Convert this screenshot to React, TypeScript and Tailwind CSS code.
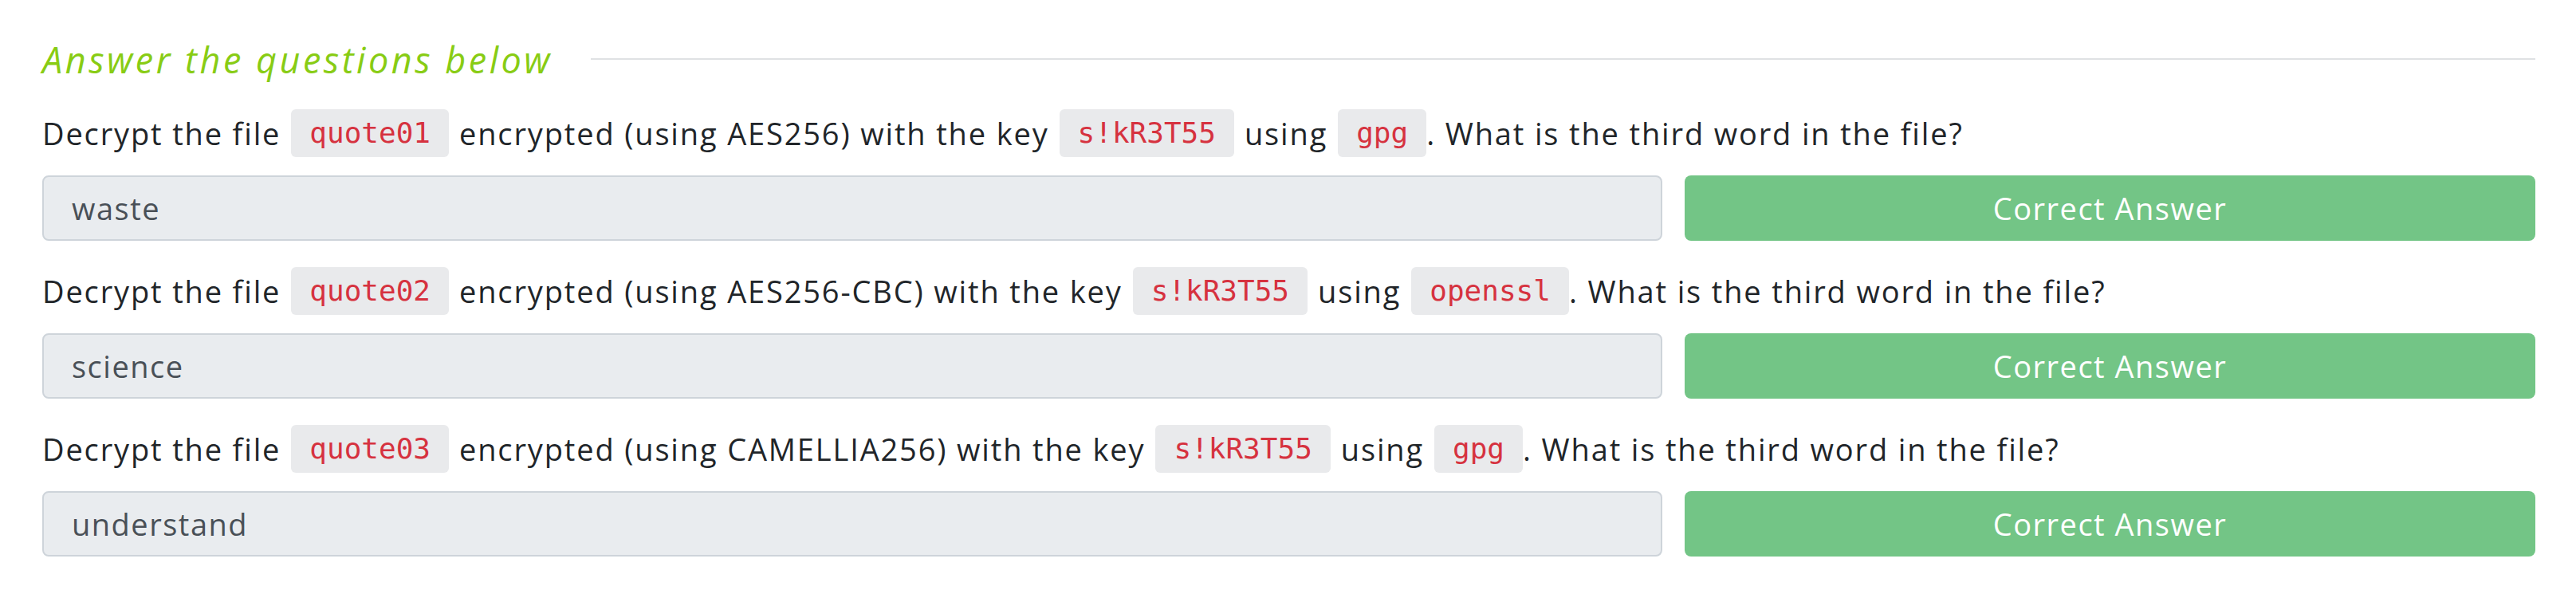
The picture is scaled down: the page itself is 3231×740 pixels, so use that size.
import React from "react";

const font = { fontFamily: '"Open Sans", "Noto Sans", sans-serif' };

function Code({ children }: { children: React.ReactNode }) {
  return (
    <code
      className="inline-flex items-center h-[60px] px-[23px] mx-[13px] rounded-[6px] bg-[#e9eaec] text-[#d6323f] text-[36px] tracking-normal align-middle"
      style={{ fontFamily: '"DejaVu Sans Mono", "Liberation Mono", monospace' }}
    >
      {children}
    </code>
  );
}

type Q = {
  file: string;
  algo: string;
  tool: string;
  answer: string;
};

const questions: Q[] = [
  { file: "quote01", algo: "AES256", tool: "gpg", answer: "waste" },
  { file: "quote02", algo: "AES256-CBC", tool: "openssl", answer: "science" },
  { file: "quote03", algo: "CAMELLIA256", tool: "gpg", answer: "understand" },
];

export default function App() {
  return (
    <div className="w-[3231px] h-[740px] bg-white pl-[53px] pr-[51px] pt-[46px]" style={font}>
      <div className="flex items-center h-[56px]">
        <span className="italic text-[45px] tracking-[3.5px] text-[#88cc14] leading-none">Answer the questions below</span>
        <div className="flex-1 h-[2px] bg-[#dfe1e4] ml-[48px]" />
      </div>
      <div className="flex flex-col mt-[35px]">
        {questions.map((q) => (
          <div key={q.file} className="flex flex-col mb-[33px]">
            <div className="flex items-center h-[60px] text-[38px] tracking-[1.85px] text-[#212529] whitespace-nowrap">
              <span>Decrypt the file</span>
              <Code>{q.file}</Code>
              <span>encrypted (using {q.algo}) with the key</span>
              <Code>s!kR3T55</Code>
              <span>using</span>
              <Code>{q.tool}</Code>
              <span className="-ml-[13px]">. What is the third word in the file?</span>
            </div>
            <div className="flex gap-[28px] mt-[23px]">
              <div className="flex-1 h-[82px] rounded-[8px] border-2 border-[#ced4da] bg-[#e9ecef] flex items-center px-[35px] text-[38px] tracking-[1.5px] text-[#495057]">
                {q.answer}
              </div>
              <div className="w-[1067px] h-[82px] rounded-[8px] bg-[#73c586] flex items-center justify-center text-[38px] tracking-[1.5px] text-white">
                Correct Answer
              </div>
            </div>
          </div>
        ))}
      </div>
    </div>
  );
}
